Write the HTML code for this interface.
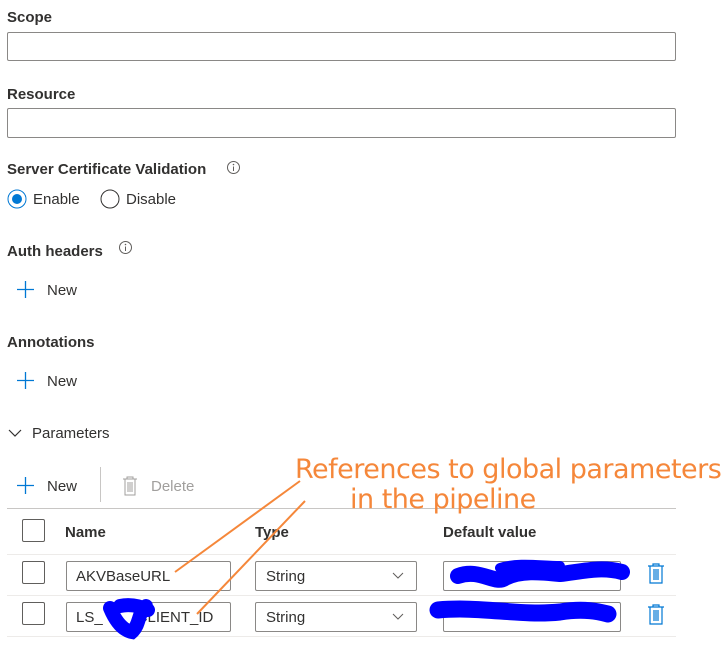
<!DOCTYPE html>
<html><head><style>
body{margin:0;width:727px;height:651px;background:#fff;font-family:"Liberation Sans",sans-serif;color:#323130;position:relative;overflow:hidden}
.a{position:absolute;white-space:nowrap}
.lbl{font-size:15px;font-weight:bold;color:#323130}
.inp{position:absolute;border:1px solid #8a8886;border-radius:2px;background:#fff;box-sizing:border-box}
.t{font-size:15px}
.cb{position:absolute;width:23px;height:23px;border:1px solid #605e5c;border-radius:2px;box-sizing:border-box}
.ln{position:absolute;left:7px;width:669px;height:1px;background:#edebe9}
</style></head><body>
<div class="a lbl" style="left:7px;top:9px">Scope</div>
<div class="inp" style="left:7px;top:32px;width:669px;height:29px"></div>
<div class="a lbl" style="left:7px;top:86px">Resource</div>
<div class="inp" style="left:7px;top:108px;width:669px;height:30px"></div>
<div class="a lbl" style="left:7px;top:161px">Server Certificate Validation</div>
<svg class="a" style="left:226px;top:160px" width="15" height="15"><circle cx="7.5" cy="7.5" r="6" fill="none" stroke="#605e5c"/><line x1="7.5" y1="6.5" x2="7.5" y2="11" stroke="#605e5c"/><circle cx="7.5" cy="4.5" r=".8" fill="#605e5c"/></svg>
<svg class="a" style="left:7px;top:189px" width="20" height="20"><circle cx="10" cy="10" r="9" fill="none" stroke="#0078d4"/><circle cx="10" cy="10" r="5" fill="#0078d4"/></svg>
<div class="a t" style="left:33px;top:191px">Enable</div>
<svg class="a" style="left:100px;top:189px" width="20" height="20"><circle cx="10" cy="10" r="9" fill="none" stroke="#323130"/></svg>
<div class="a t" style="left:126px;top:191px">Disable</div>
<div class="a lbl" style="left:7px;top:243px">Auth headers</div>
<svg class="a" style="left:118px;top:240px" width="15" height="15"><circle cx="7.5" cy="7.5" r="6" fill="none" stroke="#605e5c"/><line x1="7.5" y1="6.5" x2="7.5" y2="11" stroke="#605e5c"/><circle cx="7.5" cy="4.5" r=".8" fill="#605e5c"/></svg>
<svg class="a" style="left:16px;top:280px" width="19" height="19"><path d="M9.5 1V18M1 9.5H18" stroke="#0078d4" stroke-width="1.3"/></svg>
<div class="a t" style="left:47px;top:282px">New</div>
<div class="a lbl" style="left:7px;top:334px">Annotations</div>
<svg class="a" style="left:16px;top:371px" width="19" height="19"><path d="M9.5 1V18M1 9.5H18" stroke="#0078d4" stroke-width="1.3"/></svg>
<div class="a t" style="left:47px;top:373px">New</div>
<svg class="a" style="left:8px;top:428px" width="14" height="10"><path d="M1 2L7 8L13 2" fill="none" stroke="#323130" stroke-width="1.2"/></svg>
<div class="a t" style="left:32px;top:425px">Parameters</div>
<svg class="a" style="left:16px;top:476px" width="19" height="19"><path d="M9.5 1V18M1 9.5H18" stroke="#0078d4" stroke-width="1.3"/></svg>
<div class="a t" style="left:47px;top:478px">New</div>
<div class="a" style="left:100px;top:467px;width:1px;height:35px;background:#c8c6c4"></div>
<svg class="a" style="left:122px;top:476px" width="16" height="20"><path d="M1 3H15M5 3V1H11V3M3 3V19H13V3M6 6V16M8 6V16M10 6V16" fill="none" stroke="#a19f9d" stroke-width="1"/></svg>
<div class="a t" style="left:151px;top:478px;color:#a19f9d">Delete</div>
<div class="a" style="left:7px;top:508px;width:669px;height:1px;background:#c8c6c4"></div>
<div class="cb" style="left:22px;top:519px"></div>
<div class="a lbl" style="left:65px;top:524px">Name</div>
<div class="a lbl" style="left:255px;top:524px">Type</div>
<div class="a lbl" style="left:443px;top:524px">Default value</div>
<div class="ln" style="top:554px"></div>
<div class="ln" style="top:595px"></div>
<div class="ln" style="top:636px"></div>
<div class="cb" style="left:22px;top:561px"></div>
<div class="inp" style="left:66px;top:561px;width:165px;height:30px"></div>
<div class="a t" style="left:76px;top:568px">AKVBaseURL</div>
<div class="inp" style="left:255px;top:561px;width:162px;height:30px"></div>
<div class="a t" style="left:266px;top:568px">String</div>
<svg class="a" style="left:392px;top:572px" width="12" height="8"><path d="M1 1L6 6L11 1" fill="none" stroke="#605e5c"/></svg>
<div class="inp" style="left:443px;top:561px;width:178px;height:30px"></div>
<svg class="a" style="left:647px;top:562px" width="18" height="22"><path d="M1 4H17M6 4V2H12V4M3 4V21H15V4M7 7V18M9 7V18M11 7V18" fill="none" stroke="#0078d4" stroke-width="1.2"/></svg>
<div class="cb" style="left:22px;top:602px"></div>
<div class="inp" style="left:66px;top:602px;width:165px;height:30px"></div>
<div class="a t" style="left:76px;top:609px">LS_<span style="margin-left:34px">CLIENT_ID</span></div>
<div class="inp" style="left:255px;top:602px;width:162px;height:30px"></div>
<div class="a t" style="left:266px;top:609px">String</div>
<svg class="a" style="left:392px;top:613px" width="12" height="8"><path d="M1 1L6 6L11 1" fill="none" stroke="#605e5c"/></svg>
<div class="inp" style="left:443px;top:602px;width:178px;height:30px"></div>
<svg class="a" style="left:647px;top:603px" width="18" height="22"><path d="M1 4H17M6 4V2H12V4M3 4V21H15V4M7 7V18M9 7V18M11 7V18" fill="none" stroke="#0078d4" stroke-width="1.2"/></svg>
<svg class="a" style="left:0;top:0" width="727" height="651">
<path d="M458 576C480 568 495 585 505 578C520 570 540 572 560 574C580 572 600 566 622 572" fill="none" stroke="#0000ff" stroke-width="16" stroke-linecap="round"/>
<path d="M500 568C520 562 540 566 560 566" fill="none" stroke="#0000ff" stroke-width="10" stroke-linecap="round"/>
<path d="M438 610C480 606 520 616 560 612C585 608 600 612 608 614" fill="none" stroke="#0000ff" stroke-width="17" stroke-linecap="round"/>
<path d="M110 608C115 620 122 630 132 632C140 625 138 612 146 606M120 606C130 604 140 606 148 610" fill="none" stroke="#0000ff" stroke-width="14" stroke-linecap="round"/>
<line x1="300" y1="481" x2="175" y2="572" stroke="#f5873a" stroke-width="2"/>
<line x1="305" y1="501" x2="197" y2="614" stroke="#f5873a" stroke-width="2"/>
</svg>
<div class="a" style="left:295px;top:454px;font-size:27px;color:#f5873a;font-family:'DejaVu Sans',sans-serif;letter-spacing:-0.5px">References to global parameters</div>
<div class="a" style="left:350px;top:484px;font-size:27px;color:#f5873a;font-family:'DejaVu Sans',sans-serif;letter-spacing:-0.5px">in the pipeline</div>
</body></html>
